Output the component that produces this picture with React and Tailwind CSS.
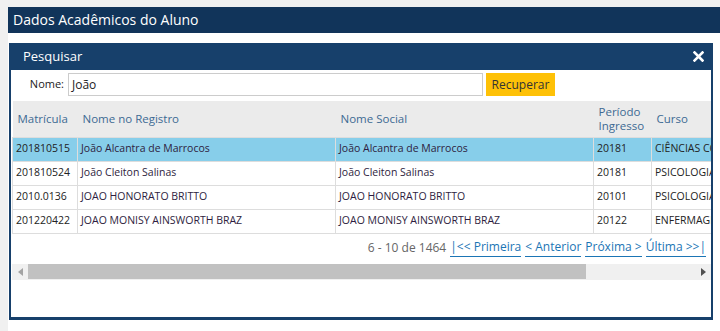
import React from "react";

const rows = [
  { mat: "201810515", nome: "João Alcantra de Marrocos", social: "João Alcantra de Marrocos", per: "20181", curso: "CIÊNCIAS CONTÁBEIS", sel: true },
  { mat: "201810524", nome: "João Cleiton Salinas", social: "João Cleiton Salinas", per: "20181", curso: "PSICOLOGIA" },
  { mat: "2010.0136", nome: "JOAO HONORATO BRITTO", social: "JOAO HONORATO BRITTO", per: "20101", curso: "PSICOLOGIA" },
  { mat: "201220422", nome: "JOAO MONISY AINSWORTH BRAZ", social: "JOAO MONISY AINSWORTH BRAZ", per: "20122", curso: "ENFERMAGEM" },
];

export default function App() {
  return (
    <div className="w-[720px] h-[331px] bg-[#f0f0f0] overflow-hidden font-['Open_Sans',sans-serif] text-[11px] text-[#222]">
      <div className="ml-[8px] mt-[7px] h-[324px] bg-white">
        {/* TITLE */}
        <div className="h-[26px] bg-[#11345a] text-white text-[14px] leading-[26px] pl-[5px]">
          Dados Acadêmicos do Aluno
        </div>

        {/* MODAL */}
        <div className="mt-[10px] ml-px w-[704px] h-[277px] border-x-2 border-b-[3px] border-[#17406b] flex flex-col bg-white">
          <div className="h-[27px] bg-[#17406b] flex items-center justify-between pl-[12px] pr-[5px] text-white">
            <span className="text-[13px]">Pesquisar</span>
            <svg width="11" height="11" viewBox="0 0 11 11" className="mr-[2px]">
              <path d="M1.5 1.5 L9.5 9.5 M9.5 1.5 L1.5 9.5" stroke="white" strokeWidth="2.6" strokeLinecap="square" />
            </svg>
          </div>

          {/* SEARCH */}
          <div className="flex items-center mt-[3px] h-[23px]">
            <span className="w-[57px] text-right pr-[4px] text-[11px]">Nome:</span>
            <div className="w-[415px] h-[23px] border border-[#cccccc] flex items-center px-[3px] text-[12px]">João</div>
            <button className="ml-[3px] w-[69px] h-[23px] bg-[#fec107] text-[12px] text-[#333]">Recuperar</button>
          </div>

          {/* TABLE */}
          <div className="mt-[5px] ml-px overflow-hidden w-[699px]">
            <table className="border-collapse w-[820px] table-fixed">
              <colgroup>
                <col className="w-[65px]" />
                <col className="w-[258px]" />
                <col className="w-[258px]" />
                <col className="w-[58px]" />
                <col className="w-[181px]" />
              </colgroup>
              <thead>
                <tr className="h-[36px] bg-[#ebebeb] text-[#3d6a93] text-[11.5px] leading-[14px] text-left">
                  <th className="font-normal px-[5px]">Matrícula</th>
                  <th className="font-normal px-[5px]">Nome no Registro</th>
                  <th className="font-normal px-[5px]">Nome Social</th>
                  <th className="font-normal px-[5px]">Período Ingresso</th>
                  <th className="font-normal px-[5px]">Curso</th>
                </tr>
              </thead>
              <tbody className="text-[10.5px]">
                {rows.map((r) => (
                  <tr key={r.mat} className={`h-[24px] ${r.sel ? "bg-[#87ceea]" : "bg-white"}`}>
                    <td className="border border-[#dddddd] px-[3px] whitespace-nowrap">{r.mat}</td>
                    <td className="border border-[#dddddd] px-[3px] whitespace-nowrap text-[#2e1d40]">{r.nome}</td>
                    <td className="border border-[#dddddd] px-[3px] whitespace-nowrap text-[#2e1d40]">{r.social}</td>
                    <td className="border border-[#dddddd] px-[3px] whitespace-nowrap">{r.per}</td>
                    <td className="border border-[#dddddd] px-[3px] whitespace-nowrap">{r.curso}</td>
                  </tr>
                ))}
              </tbody>
            </table>

            {/* PAGER */}
            <div className="h-[28px] flex items-center justify-end pr-[5px] text-[12px] text-[#666] gap-[4px]">
              <span>6 - 10 de 1464</span>
              <span className="text-[#1b75b5] border-b border-[#1b75b5] leading-[18px]">|&lt;&lt; Primeira</span>
              <span className="text-[#1b75b5] border-b border-[#1b75b5] leading-[18px]">&lt; Anterior</span>
              <span className="text-[#1b75b5] border-b border-[#1b75b5] leading-[18px]">Próxima &gt;</span>
              <span className="text-[#1b75b5] border-b border-[#1b75b5] leading-[18px]">Última &gt;&gt;|</span>
            </div>

            {/* SCROLLBAR */}
            <div className="mt-[2px] h-[16px] bg-[#f0f0f0] flex items-center">
              <div className="w-[16px] flex justify-center">
                <svg width="5" height="8" viewBox="0 0 5 8"><path d="M5 0 L0 4 L5 8 Z" fill="#a3a3a3" /></svg>
              </div>
              <div className="w-[558px] h-[15px] bg-[#c1c1c1]" />
              <div className="flex-1" />
              <div className="w-[16px] flex justify-center">
                <svg width="5" height="8" viewBox="0 0 5 8"><path d="M0 0 L5 4 L0 8 Z" fill="#505050" /></svg>
              </div>
            </div>
          </div>
        </div>
      </div>
    </div>
  );
}
